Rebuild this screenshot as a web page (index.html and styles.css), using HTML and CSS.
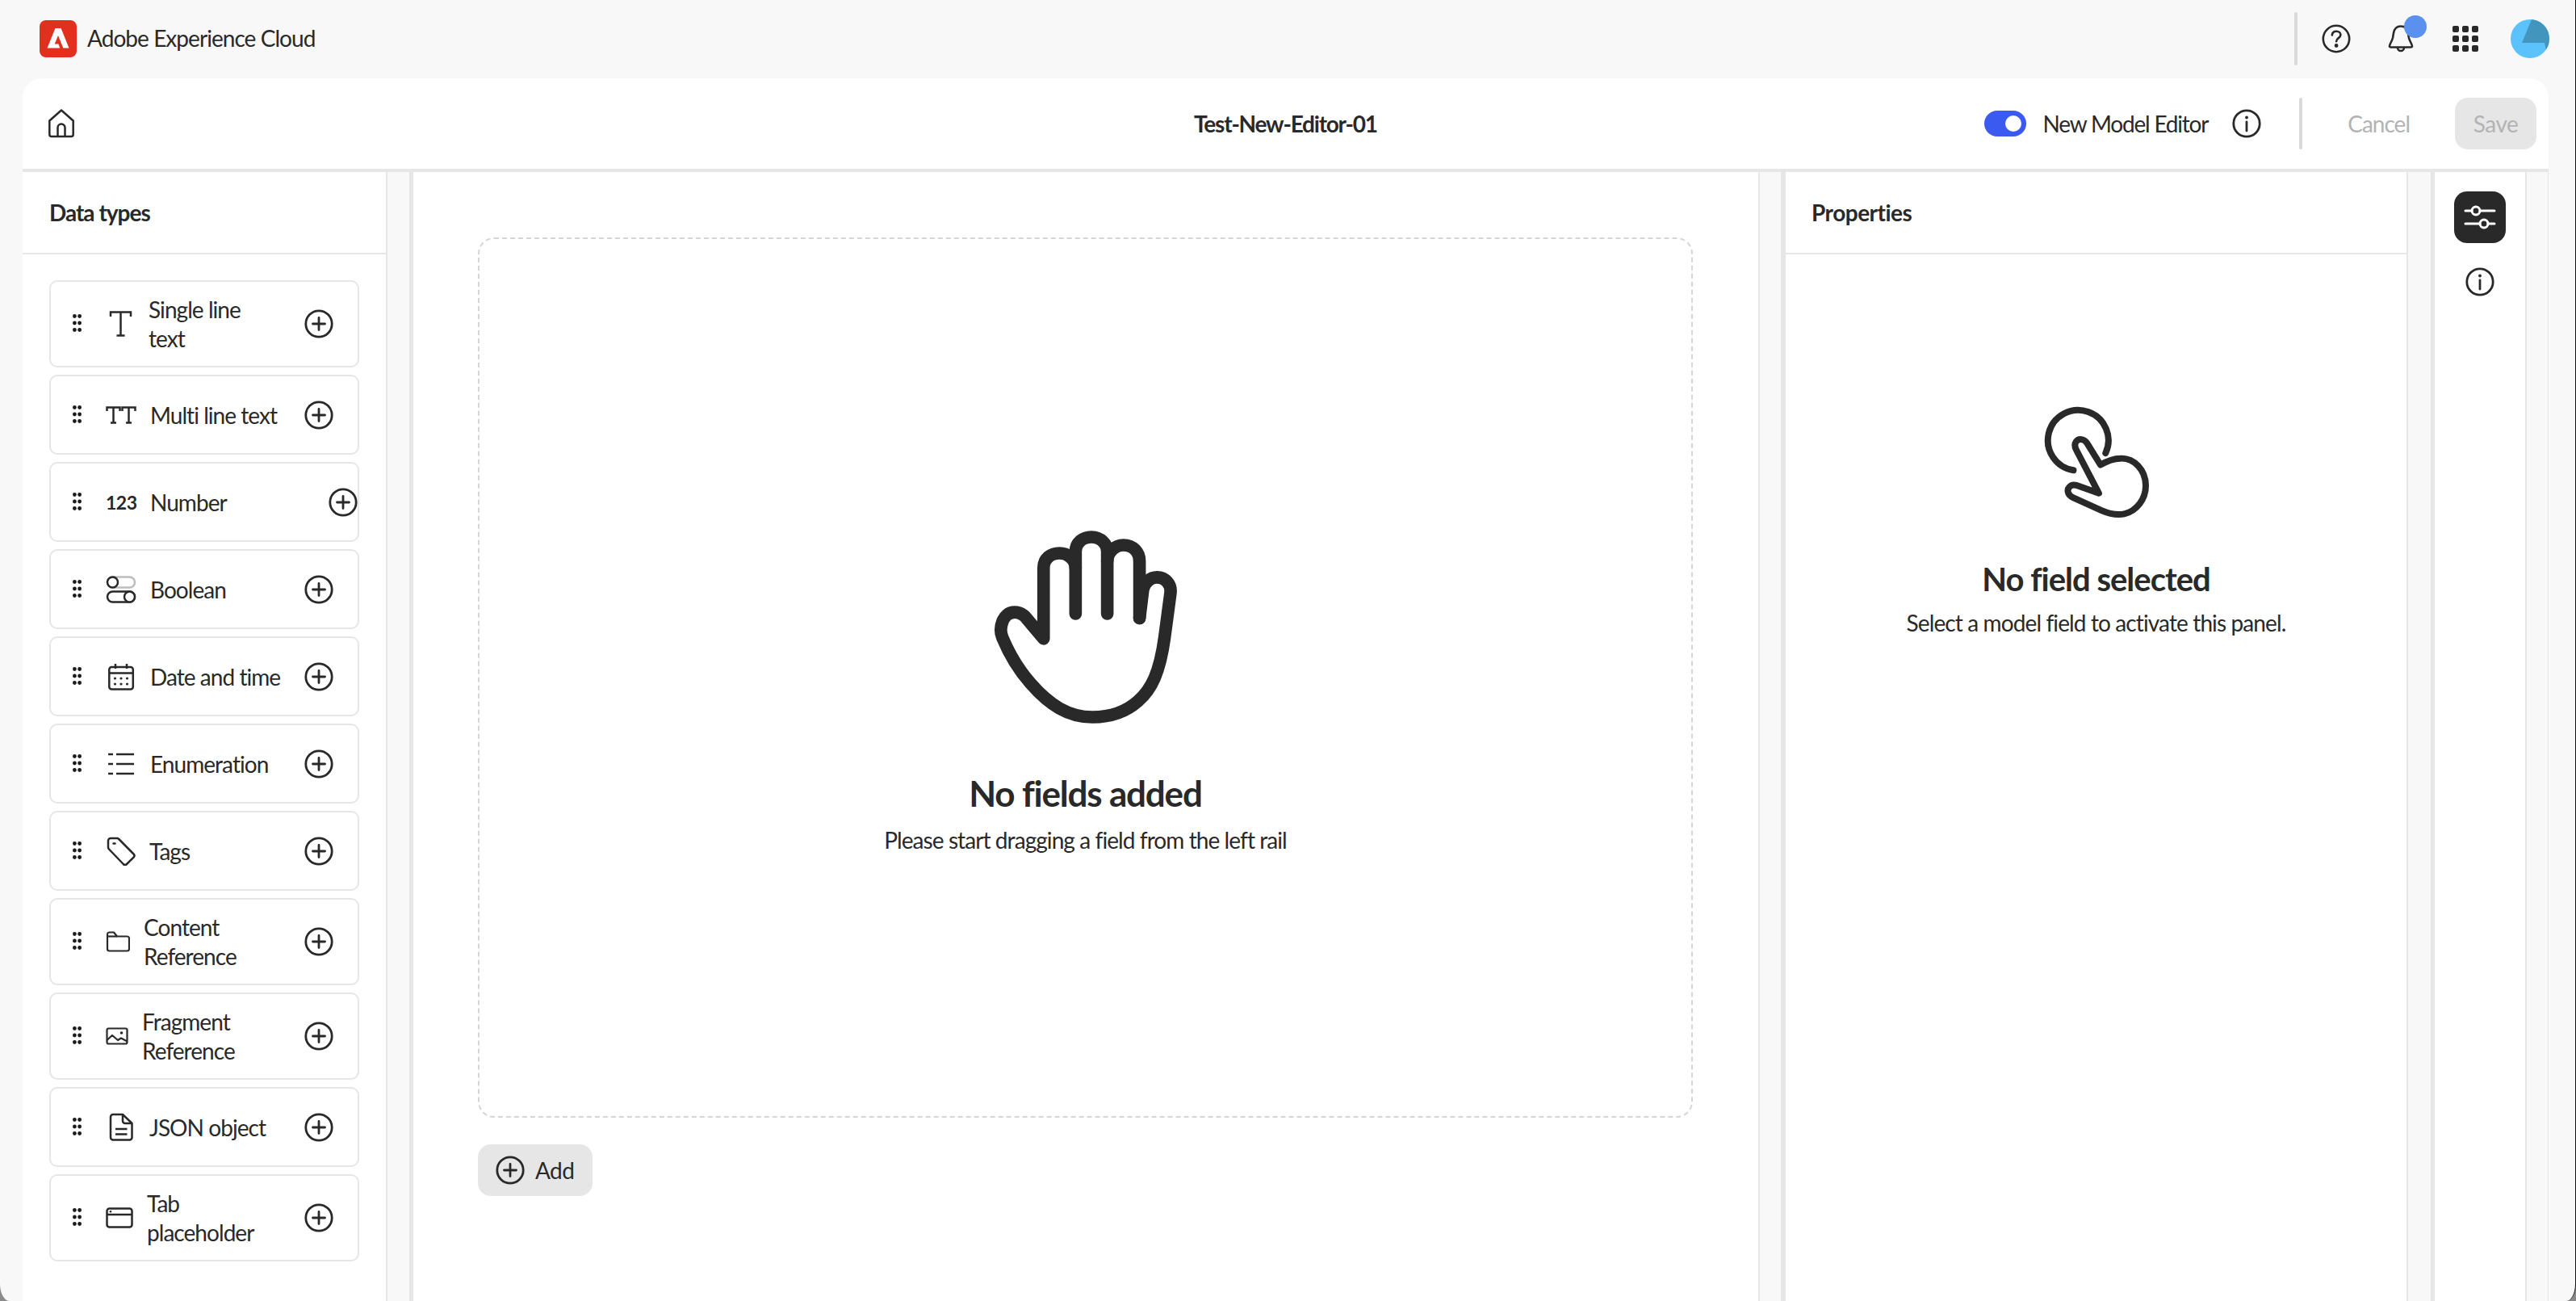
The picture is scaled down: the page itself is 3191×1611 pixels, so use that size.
FILE: index.html
```html
<!DOCTYPE html>
<html>

<head>
  <meta charset="UTF-8">
  <meta name="viewport" content="width=device-width, initial-scale=1.0">
  <title>Test-New-Editor-01</title>
  <link rel="stylesheet" href="styles.css">
</head>

<body>
  <svg class="defs" width="0" height="0">
    <symbol id="plus" viewBox="0 0 36 36">
      <circle cx="18" cy="18" r="16.2" fill="none" stroke="currentColor" stroke-width="2.8" />
      <path d="M18 10.5v15M10.5 18h15" fill="none" stroke="currentColor" stroke-width="2.8" stroke-linecap="round" />
    </symbol>
    <symbol id="info" viewBox="0 0 36 36">
      <circle cx="18" cy="18" r="16.2" fill="none" stroke="currentColor" stroke-width="2.8" />
      <circle cx="18" cy="10.5" r="1.9" fill="currentColor" />
      <path d="M18 16v11" fill="none" stroke="currentColor" stroke-width="2.8" stroke-linecap="round" />
    </symbol>
    <symbol id="drag" viewBox="0 0 11 22">
      <circle cx="2.4" cy="2.5" r="2.4" />
      <circle cx="8.6" cy="2.5" r="2.4" />
      <circle cx="2.4" cy="11" r="2.4" />
      <circle cx="8.6" cy="11" r="2.4" />
      <circle cx="2.4" cy="19.5" r="2.4" />
      <circle cx="8.6" cy="19.5" r="2.4" />
    </symbol>
  </svg>

  <div class="window">
    <header class="topbar">
      <svg class="logo" width="46" height="46" viewBox="0 0 46 46">
        <rect width="46" height="46" rx="8" fill="#e1301e" />
        <path transform="translate(9.5 10) scale(.9 .94)" d="M11.1 0H19L30 26H22.1L15 9.6 10.2 20.8H15.4L17.5 26H0Z" fill="#fff" />
      </svg>
      <span class="brand">Adobe Experience Cloud</span>
      <div class="topbar-right">
        <span class="top-divider"></span>
        <div class="top-btn">
          <svg width="36" height="36" viewBox="0 0 36 36" fill="none" stroke="#292929" stroke-width="2.6" stroke-linecap="round">
            <circle cx="18" cy="18" r="16.2" />
            <path d="M12.8 13.5c.3-3 2.6-4.8 5.4-4.8 3 0 5.2 1.9 5.2 4.5 0 3.9-5.3 4-5.3 8" />
            <circle cx="18.1" cy="26.5" r="1.1" fill="#292929" />
          </svg>
        </div>
        <div class="top-btn">
          <div class="bell">
            <svg width="32" height="34" viewBox="0 0 32 34" fill="none" stroke="#292929" stroke-width="2.6" stroke-linejoin="round">
              <path d="M2 26c0-2 3-6 4-10l1-6c1-6 5-8.5 9-8.5s8 2.5 9 8.5l1 6c1 4 4 8 4 10 0 1-1 1.5-2 1.5H4c-1 0-2-.5-2-1.5Z" />
              <path d="M12 28a4 4 0 0 0 8 0" />
            </svg>
            <span class="badge"></span>
          </div>
        </div>
        <div class="top-btn">
          <svg width="32" height="32" viewBox="0 0 32 32" fill="#292929">
            <rect width="8" height="8" rx="2" />
            <rect x="12" width="8" height="8" rx="2" />
            <rect x="24" width="8" height="8" rx="2" />
            <rect y="12" width="8" height="8" rx="2" />
            <rect x="12" y="12" width="8" height="8" rx="2" />
            <rect x="24" y="12" width="8" height="8" rx="2" />
            <rect y="24" width="8" height="8" rx="2" />
            <rect x="12" y="24" width="8" height="8" rx="2" />
            <rect x="24" y="24" width="8" height="8" rx="2" />
          </svg>
        </div>
        <div class="top-btn">
          <svg width="48" height="48" viewBox="0 0 48 48">
            <clipPath id="avatar-clip">
              <circle cx="24" cy="24" r="24" />
            </clipPath>
            <circle cx="24" cy="24" r="24" fill="#5bc2fb" />
            <path d="M26 0H48V33L44 38 42 29H14Z" fill="#4295bd" clip-path="url(#avatar-clip)" />
          </svg>
        </div>
      </div>
    </header>

    <div class="shell">
      <div class="shell-head">
        <div class="head-left">
          <svg width="32" height="36" viewBox="0 0 32 36" fill="none" stroke="#292929" stroke-width="2.5" stroke-linejoin="round">
            <path d="M16 1.5 1.3 14.5V31.5a2.5 2.5 0 0 0 2.5 2.5H28.2a2.5 2.5 0 0 0 2.5-2.5V14.5Z" />
            <path d="M11.5 34V23a4.5 4.5 0 0 1 9 0V34" />
          </svg>
        </div>
        <div class="head-title">Test-New-Editor-01</div>
        <div class="head-right">
          <span class="toggle"><span class="knob"></span></span>
          <span class="toggle-label">New Model Editor</span>
          <svg class="icon-info" width="36" height="36"><use href="#info" /></svg>
          <span class="head-divider"></span>
          <span class="btn-cancel">Cancel</span>
          <span class="btn-save">Save</span>
        </div>
      </div>

      <div class="shell-body">
        <aside class="types">
          <div class="panel-title">Data types</div>
          <div class="type-list">
            <div class="field">
              <svg class="drag" width="11" height="22"><use href="#drag" /></svg>
              <svg class="field-icon" width="36" height="32" viewBox="0 0 36 32" fill="none" stroke="#292929" stroke-width="2.5">
                <path d="M6 7V1.5H31V7M18.5 1.5V30.5M13.5 30.5H23.5" />
              </svg>
              <span class="field-name">Single line<br>text</span>
              <svg class="add" width="36" height="36"><use href="#plus" /></svg>
            </div>
            <div class="field">
              <svg class="drag" width="11" height="22"><use href="#drag" /></svg>
              <svg class="field-icon" width="38" height="22" viewBox="0 0 38 22" fill="none" stroke="#292929" stroke-width="2.5">
                <path d="M1.5 6V1.5H17.5V6M9.5 1.5V20.5M6 20.5H13M20.5 6V1.5H36.5V6M28.5 1.5V20.5M25 20.5H32" />
              </svg>
              <span class="field-name">Multi line text</span>
              <svg class="add" width="36" height="36"><use href="#plus" /></svg>
            </div>
            <div class="field field-number">
              <svg class="drag" width="11" height="22"><use href="#drag" /></svg>
              <span class="field-icon digits">123</span>
              <span class="field-name">Number</span>
              <svg class="add" width="36" height="36"><use href="#plus" /></svg>
            </div>
            <div class="field">
              <svg class="drag" width="11" height="22"><use href="#drag" /></svg>
              <svg class="field-icon" width="38" height="34" viewBox="0 0 38 34" fill="none" stroke-width="2.5">
                <rect x="2" y="1.5" width="34" height="13" rx="6.5" stroke="#bdbdbd" />
                <circle cx="8.5" cy="8" r="6.5" stroke="#292929" fill="#fff" />
                <rect x="2" y="19.5" width="34" height="13" rx="6.5" stroke="#292929" />
                <circle cx="29.5" cy="26" r="6.5" stroke="#292929" fill="#fff" />
              </svg>
              <span class="field-name">Boolean</span>
              <svg class="add" width="36" height="36"><use href="#plus" /></svg>
            </div>
            <div class="field">
              <svg class="drag" width="11" height="22"><use href="#drag" /></svg>
              <svg class="field-icon" width="38" height="34" viewBox="0 0 38 34" fill="none" stroke="#292929" stroke-width="2.5">
                <rect x="4.3" y="5" width="29.5" height="27.5" rx="3" />
                <path d="M4.3 12.5H33.8M12 1V7M26 1V7" />
                <g fill="#292929" stroke="none">
                  <circle cx="11.5" cy="19" r="1.6" />
                  <circle cx="19" cy="19" r="1.6" />
                  <circle cx="26.5" cy="19" r="1.6" />
                  <circle cx="11.5" cy="26" r="1.6" />
                  <circle cx="19" cy="26" r="1.6" />
                  <circle cx="26.5" cy="26" r="1.6" />
                </g>
              </svg>
              <span class="field-name">Date and time</span>
              <svg class="add" width="36" height="36"><use href="#plus" /></svg>
            </div>
            <div class="field">
              <svg class="drag" width="11" height="22"><use href="#drag" /></svg>
              <svg class="field-icon" width="38" height="28" viewBox="0 0 38 28" fill="none" stroke="#292929" stroke-width="2.5">
                <path d="M3 2H9M13 2H35M3 14H9M13 14H35M3 26H9M13 26H35" />
              </svg>
              <span class="field-name">Enumeration</span>
              <svg class="add" width="36" height="36"><use href="#plus" /></svg>
            </div>
            <div class="field">
              <svg class="drag" width="11" height="22"><use href="#drag" /></svg>
              <svg class="field-icon" width="37" height="36" viewBox="0 0 37 36" fill="none" stroke="#292929" stroke-width="2.5" stroke-linejoin="round">
                <path d="M6 2H14a3 3 0 0 1 2.2 1L34.5 21.5a3 3 0 0 1 0 4.2L26 34a3 3 0 0 1-4.2 0L4 15.5a3 3 0 0 1-1-2.2V5a3 3 0 0 1 3-3Z" />
                <path d="M9.5 8.5h2" stroke-linecap="round" />
              </svg>
              <span class="field-name">Tags</span>
              <svg class="add" width="36" height="36"><use href="#plus" /></svg>
            </div>
            <div class="field">
              <svg class="drag" width="11" height="22"><use href="#drag" /></svg>
              <svg class="field-icon" width="30" height="26" viewBox="0 0 30 26" fill="none" stroke="#292929" stroke-width="2.2" stroke-linejoin="round">
                <path d="M2 4a2.5 2.5 0 0 1 2.5-2.5H10L14 6.5H26.5A2.5 2.5 0 0 1 29 9V22a2.5 2.5 0 0 1-2.5 2.5H4.5A2.5 2.5 0 0 1 2 22Z" />
                <path d="M2 6.5H14" />
              </svg>
              <span class="field-name">Content<br>Reference</span>
              <svg class="add" width="36" height="36"><use href="#plus" /></svg>
            </div>
            <div class="field">
              <svg class="drag" width="11" height="22"><use href="#drag" /></svg>
              <svg class="field-icon" width="28" height="22" viewBox="0 0 28 22" fill="none" stroke="#292929" stroke-width="2.2" stroke-linejoin="round">
                <rect x="1.5" y="1.5" width="25" height="19" rx="2" />
                <path d="M1.5 16 8 10l7 6 4-2.5 7.5 4" />
                <circle cx="19.5" cy="7" r="1.8" fill="#292929" stroke="none" />
              </svg>
              <span class="field-name">Fragment<br>Reference</span>
              <svg class="add" width="36" height="36"><use href="#plus" /></svg>
            </div>
            <div class="field">
              <svg class="drag" width="11" height="22"><use href="#drag" /></svg>
              <svg class="field-icon" width="37" height="36" viewBox="0 0 37 36" fill="none" stroke="#292929" stroke-width="2.5" stroke-linejoin="round">
                <path d="M9 2H21L32.5 13V30.5a3 3 0 0 1-3 3H9a3 3 0 0 1-3-3V5a3 3 0 0 1 3-3Z" />
                <path d="M21 2V10a3 3 0 0 0 3 3H32.5M12 20H26.5M12 26.5H26.5" />
              </svg>
              <span class="field-name">JSON object</span>
              <svg class="add" width="36" height="36"><use href="#plus" /></svg>
            </div>
            <div class="field">
              <svg class="drag" width="11" height="22"><use href="#drag" /></svg>
              <svg class="field-icon" width="34" height="26" viewBox="0 0 34 26" fill="none" stroke="#292929" stroke-width="2.5">
                <rect x="1.5" y="1.5" width="31" height="23" rx="3" />
                <path d="M1.5 9H32.5" />
                <circle cx="6" cy="5.2" r="1.3" fill="#292929" stroke="none" />
              </svg>
              <span class="field-name">Tab<br>placeholder</span>
              <svg class="add" width="36" height="36"><use href="#plus" /></svg>
            </div>
          </div>
        </aside>

        <div class="gutter gutter-left"></div>

        <main class="canvas">
          <div class="dropzone">
            <svg class="hand" width="230" height="243" viewBox="240 105 690 730" fill="none" stroke="#292929" stroke-width="47" stroke-linecap="round" stroke-linejoin="round">
              <path d="M785 437 798 330C803 305 825 285 850 285 880 285 905 310 900 345L878 510C860 640 830 700 780 745 730 790 670 805 610 805 520 805 450 760 380 680 340 635 300 570 275 510 260 475 275 415 320 415 340 415 355 425 365 438L428 513V250C428 215 455 195 487 195 520 195 547 220 547 250V420" />
              <path d="M547 250V190C547 155 575 135 606 135 640 135 665 160 665 190V420" />
              <path d="M665 225C665 190 695 165 725 165 760 165 785 190 785 225V437" />
            </svg>
            <h2 class="empty-title">No fields added</h2>
            <p class="empty-text">Please start dragging a field from the left rail</p>
          </div>
          <div class="btn-add">
            <svg width="36" height="36"><use href="#plus" /></svg>
            <span>Add</span>
          </div>
        </main>

        <div class="gutter gutter-right"></div>

        <section class="props">
          <div class="panel-title">Properties</div>
          <div class="props-empty">
            <svg class="touch" width="136" height="142" viewBox="146 88 410 426" fill="none" stroke="#292929" stroke-width="24" stroke-linecap="round" stroke-linejoin="round">
              <path d="M265 332A113 113 0 1 1 385 268" />
              <path d="M366 312 315 230C305 215 285 212 275 225 268 235 270 245 275 255L360 418 275 388C255 382 240 400 245 415 248 425 255 430 265 435L370 482C400 495 430 500 455 495 500 485 535 440 535 390 535 330 490 285 440 288 415 288 390 298 366 312Z" />
            </svg>
            <h2 class="empty-title">No field selected</h2>
            <p class="empty-text">Select a model field to activate this panel.</p>
          </div>
        </section>

        <div class="gutter gutter-rail"></div>

        <nav class="rail">
          <div class="rail-btn">
            <svg width="64" height="64" viewBox="0 0 64 64" fill="none" stroke="#fff" stroke-width="3" stroke-linecap="round">
              <path d="M14 24H22M32 24H50M14 40H32M42 40H50" />
              <circle cx="27" cy="24" r="5" />
              <circle cx="37" cy="40" r="5" />
            </svg>
          </div>
          <svg class="rail-info" width="36" height="36"><use href="#info" /></svg>
        </nav>

        <div class="rail-end"></div>
      </div>
    </div>
  </div>
</body>

</html>
```

FILE: styles.css
```css
* {
  padding: 0;
  margin: 0;
  box-sizing: border-box;
}

html,
body {
  height: 100%;
  overflow: hidden;
  background: #8a8a8a;
}

body {
  font-family: "Lato", "Noto Sans", sans-serif;
  font-size: 28px;
  color: #292929;
}

.defs {
  position: absolute;
}

.window {
  height: 100vh;
  display: flex;
  flex-direction: column;
  background: #f8f8f8;
  border-right: 1px solid #111;
  border-radius: 0 0 12px 12px / 0 0 21px 21px;
  overflow: hidden;
}

/* top bar */

.topbar {
  height: 97px;
  flex: none;
  display: flex;
  align-items: center;
  padding: 0 16px 2px 49px;
}

.brand {
  margin-left: 13px;
  margin-bottom: 2px;
  letter-spacing: -.95px;
}

.topbar-right {
  margin-left: auto;
  display: flex;
  align-items: center;
}

.top-divider {
  width: 4px;
  height: 66px;
  margin-right: 8px;
  border-radius: 2px;
  background: #dadada;
}

.top-btn {
  width: 80px;
  display: flex;
  justify-content: center;
  align-items: center;
}

.bell {
  position: relative;
  height: 34px;
}

.badge {
  position: absolute;
  left: 20px;
  top: -12px;
  width: 28px;
  height: 28px;
  border-radius: 50%;
  background: #5a90ee;
}

/* shell */

.shell {
  flex: 1;
  min-height: 0;
  width: 3129px;
  margin-left: 28px;
  display: flex;
  flex-direction: column;
  background: #fff;
  border-radius: 24px 24px 0 0;
}

.shell-head {
  height: 116px;
  flex: none;
  display: grid;
  grid-template-columns: 1fr auto 1fr;
  align-items: center;
  padding: 0 15px;
  border-bottom: 4px solid #e6e6e6;
}

.head-left {
  display: flex;
  padding-left: 17px;
}

.head-title {
  font-weight: 700;
  letter-spacing: -1.2px;
}

.head-right {
  display: flex;
  justify-content: flex-end;
  align-items: center;
}

.toggle {
  width: 52px;
  height: 32px;
  display: flex;
  justify-content: flex-end;
  align-items: center;
  padding-right: 6px;
  border-radius: 16px;
  background: #3b5af0;
}

.knob {
  width: 20px;
  height: 20px;
  border-radius: 50%;
  background: #fff;
}

.toggle-label {
  margin-left: 21px;
  letter-spacing: -1.2px;
}

.icon-info {
  margin-left: 30px;
}

.head-divider {
  width: 4px;
  height: 64px;
  margin-left: 47px;
  border-radius: 2px;
  background: #dadada;
}

.btn-cancel {
  margin-left: 56px;
  color: #b3b3b3;
  letter-spacing: -1px;
}

.btn-save {
  width: 101px;
  height: 64px;
  margin-left: 56px;
  display: flex;
  justify-content: center;
  align-items: center;
  border-radius: 16px;
  background: #e6e6e6;
  color: #b3b3b3;
  letter-spacing: -.5px;
}

.shell-body {
  flex: 1;
  min-height: 0;
  display: flex;
}

/* panels */

.types {
  width: 452px;
  flex: none;
  border-right: 2px solid #e6e6e6;
}

.panel-title {
  height: 102px;
  padding: 0 0 0 33px;
  display: flex;
  align-items: center;
  font-weight: 700;
  letter-spacing: -1px;
  border-bottom: 2px solid #e6e6e6;
}

.type-list {
  padding: 32px 33px 0;
  display: flex;
  flex-direction: column;
  gap: 9px;
}

.field {
  min-height: 99px;
  display: flex;
  align-items: center;
  padding: 16px 30px 16px 27px;
  border: 2px solid #e6e6e6;
  border-radius: 10px;
}

.field-number {
  padding-right: 0;
}

.drag {
  flex: none;
  fill: #1c1c1c;
  margin-top: -2px;
}

.field-icon {
  flex: none;
  margin: 0 17px 0 30px;
}

.digits {
  width: 38px;
  font-size: 23px;
  font-weight: 700;
  text-align: center;
  letter-spacing: -.5px;
}

.field-name {
  line-height: 36px;
  letter-spacing: -.95px;
  white-space: nowrap;
}

.add {
  flex: none;
  margin-left: auto;
  color: #292929;
}

.gutter {
  flex: none;
  background: #f8f8f8;
}

.gutter-left {
  width: 32px;
  border-right: 5px solid #e6e6e6;
}

.canvas {
  width: 1668px;
  flex: none;
  padding: 81px 81px 0 80px;
  border-right: 2px solid #e6e6e6;
}

.dropzone {
  height: 1090px;
  display: flex;
  flex-direction: column;
  align-items: center;
  padding-top: 359px;
  border: 2px dashed #d5d5d5;
  border-radius: 20px;
}

.hand {
  display: block;
}

.empty-title {
  margin-top: 56px;
  font-size: 44px;
  line-height: 56px;
  font-weight: 700;
  letter-spacing: -1.2px;
}

.empty-text {
  margin-top: 10px;
  line-height: 40px;
  letter-spacing: -.92px;
}

.btn-add {
  width: 142px;
  height: 64px;
  margin-top: 33px;
  display: flex;
  align-items: center;
  padding-left: 22px;
  border-radius: 16px;
  background: #e6e6e6;
}

.btn-add span {
  margin-left: 13px;
  letter-spacing: -.6px;
}

.gutter-right {
  width: 32px;
  border-right: 6px solid #e6e6e6;
}

.props {
  width: 771px;
  flex: none;
  border-right: 2px solid #e6e6e6;
}

.props .panel-title {
  padding-left: 32px;
  letter-spacing: -.5px;
}

.props-empty {
  display: flex;
  flex-direction: column;
  align-items: center;
  padding-top: 186px;
}

.props-empty .empty-title {
  margin-top: 48px;
  font-size: 40px;
  line-height: 52px;
  letter-spacing: -1px;
}

.props-empty .empty-text {
  margin-top: 8px;
  letter-spacing: -.88px;
}

.gutter-rail {
  width: 33px;
  border-right: 5px solid #e6e6e6;
}

.rail {
  width: 114px;
  flex: none;
  display: flex;
  flex-direction: column;
  align-items: center;
  padding-top: 24px;
  border-right: 2px solid #e6e6e6;
}

.rail-btn {
  width: 64px;
  height: 64px;
  border-radius: 16px;
  background: #292929;
}

.rail-btn svg {
  display: block;
}

.rail-info {
  margin-top: 30px;
}

.rail-end {
  flex: 1;
  background: #f8f8f8;
  border-right: 1px solid #e6e6e6;
}
```
